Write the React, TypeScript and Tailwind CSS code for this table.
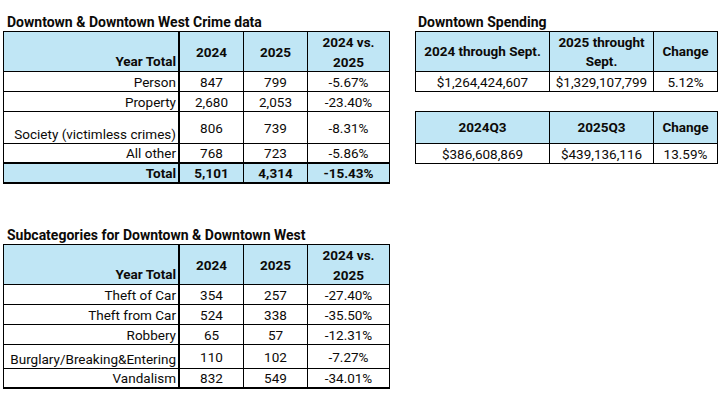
import React from "react";

type Row = {
  cells: string[];
  h?: string;
  total?: boolean;
  thickBottom?: boolean;
};

const FONT = "font-['Roboto',_'Liberation_Sans',_sans-serif]";

// four-column crime table: label column right/bottom aligned, numbers centred
function CrimeTable({ rows }: { rows: Row[] }) {
  return (
    <div className="w-[387px] border-l border-t border-black grid grid-cols-[176px_64px_64px_82px]">
      {/* header */}
      <div className="h-[40px] bg-[#c0e6f5] border-r-2 border-b border-black flex items-end justify-end pr-[2px] font-bold leading-[20px]">
        Year Total
      </div>
      <div className="h-[40px] bg-[#c0e6f5] border-r border-b border-black flex items-center justify-center font-bold leading-[20px]">
        2024
      </div>
      <div className="h-[40px] bg-[#c0e6f5] border-r border-b border-black flex items-center justify-center font-bold leading-[20px]">
        2025
      </div>
      <div className="h-[40px] bg-[#c0e6f5] border-r border-b border-black flex items-center justify-center text-center font-bold leading-[20px]">
        2024 vs.
        <br />
        2025
      </div>
      {rows.map((r, i) => (
        <React.Fragment key={i}>
          {r.cells.map((c, j) => (
            <div
              key={j}
              className={`${r.h ?? "h-[20px]"} ${r.thickBottom ? "border-b-2" : "border-b"} ${
                j === 0 ? "border-r-2 justify-end items-end pr-[2px]" : "border-r justify-center items-center"
              } ${r.total ? "bg-[#c0e6f5] font-bold" : ""} border-black flex leading-[18px] whitespace-nowrap`}
            >
              {c}
            </div>
          ))}
        </React.Fragment>
      ))}
    </div>
  );
}

function SpendTable({ heads, values, headH }: { heads: React.ReactNode[]; values: string[]; headH: string }) {
  return (
    <div className="w-[303px] border-l border-t border-black grid grid-cols-[134px_104px_64px]">
      {heads.map((h, i) => (
        <div
          key={i}
          className={`${headH} bg-[#c0e6f5] border-r border-b border-black flex items-center justify-center text-center font-bold leading-[19px]`}
        >
          {h}
        </div>
      ))}
      {values.map((v, i) => (
        <div key={i} className="h-[20px] border-r border-b border-black flex items-center justify-center leading-[18px]">
          {v}
        </div>
      ))}
    </div>
  );
}

export default function App() {
  const crime: Row[] = [
    { cells: ["Person", "847", "799", "-5.67%"] },
    { cells: ["Property", "2,680", "2,053", "-23.40%"] },
    { cells: ["Society (victimless crimes)", "806", "739", "-8.31%"], h: "h-[32px]" },
    { cells: ["All other", "768", "723", "-5.86%"], thickBottom: true },
    { cells: ["Total", "5,101", "4,314", "-15.43%"], total: true, thickBottom: true },
  ];

  const subcats: Row[] = [
    { cells: ["Theft of Car", "354", "257", "-27.40%"] },
    { cells: ["Theft from Car", "524", "338", "-35.50%"] },
    { cells: ["Robbery", "65", "57", "-12.31%"] },
    { cells: ["Burglary/Breaking&Entering", "110", "102", "-7.27%"], h: "h-[24px]" },
    { cells: ["Vandalism", "832", "549", "-34.01%"], thickBottom: true },
  ];

  return (
    <div className={`w-[727px] h-[405px] bg-white text-[#0c0a08] text-[13.5px] ${FONT}`}>
      <div className="flex items-start pt-[13px] pl-[3px]">
        <div className="flex flex-col">
          <div className="h-[18px] leading-[18px] pl-[4px] font-bold text-[14px]">Downtown &amp; Downtown West Crime data</div>
          <CrimeTable rows={crime} />
        </div>

        <div className="flex flex-col ml-[25px]">
          <div className="h-[18px] leading-[18px] pl-[3px] font-bold text-[14px]">Downtown Spending</div>
          <SpendTable
            headH="h-[40px]"
            heads={[
              "2024 through Sept.",
              <>
                2025 throught
                <br />
                Sept.
              </>,
              "Change",
            ]}
            values={["$1,264,424,607", "$1,329,107,799", "5.12%"]}
          />
          <div className="mt-[19px]">
            <SpendTable
              headH="h-[32px]"
              heads={["2024Q3", "2025Q3", "Change"]}
              values={["$386,608,869", "$439,136,116", "13.59%"]}
            />
          </div>
        </div>
      </div>

      <div className="flex flex-col pl-[3px] mt-[42px]">
        <div className="h-[18px] leading-[18px] pl-[4px] font-bold text-[14px]">Subcategories for Downtown &amp; Downtown West</div>
        <CrimeTable rows={subcats} />
      </div>
    </div>
  );
}
